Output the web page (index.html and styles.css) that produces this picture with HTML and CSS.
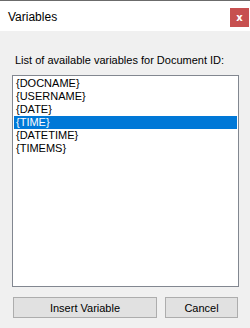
FILE: index.html
```html
<!DOCTYPE html>
<html lang="en">
<head>
    <meta charset="UTF-8">
    <title>Variables</title>
    <link rel="stylesheet" href="styles.css">
</head>
<body>
    <div class="window">
        <div class="titlebar">
            <span class="title">Variables</span>
            <button class="close">x</button>
        </div>
        <div class="content">
            <label class="caption">List of available variables for Document ID:</label>
            <ul class="listbox">
                <li>{DOCNAME}</li>
                <li>{USERNAME}</li>
                <li>{DATE}</li>
                <li class="selected">{TIME}</li>
                <li>{DATETIME}</li>
                <li>{TIMEMS}</li>
            </ul>
            <div class="buttons">
                <button class="btn btn-insert">Insert Variable</button>
                <button class="btn btn-cancel">Cancel</button>
            </div>
        </div>
    </div>
</body>
</html>
```

FILE: styles.css
```css
body {
    margin: 0;
    padding: 0;
    font-family: "Liberation Sans", Arial, sans-serif;
    font-size: 11px;
    color: #000;
    background: #f0f0f0;
}

.window {
    width: 250px;
    height: 328px;
    display: flex;
    flex-direction: column;
    border-top: 1px solid #6b6b6b;
    box-sizing: border-box;
}

.titlebar {
    height: 30px;
    background: #fff;
    display: flex;
    align-items: center;
    padding-left: 8px;
}

.title {
    flex: 1;
    font-size: 12px;
    margin-top: 1px;
}

.close {
    width: 19px;
    height: 19px;
    margin-right: 1px;
    align-self: flex-start;
    margin-top: 7px;
    border: none;
    padding: 0;
    background: #c75050;
    color: #fff;
    font-family: "DejaVu Sans", sans-serif;
    font-weight: bold;
    font-size: 10px;
    line-height: 19px;
}

.content {
    flex: 1;
    background: #f0f0f0;
    padding: 21px 12px 0 12px;
    display: flex;
    flex-direction: column;
}

.caption {
    display: block;
    height: 16px;
    line-height: 16px;
    padding-left: 3px;
    margin-bottom: 7px;
    white-space: nowrap;
}

.listbox {
    margin: 0;
    padding: 1px;
    list-style: none;
    width: 227px;
    height: 212px;
    box-sizing: border-box;
    background: #fff;
    border: 1px solid #828790;
}

.listbox li {
    height: 13px;
    line-height: 13px;
    padding-left: 2px;
    white-space: nowrap;
}

.listbox li.selected {
    background: #0078d7;
    color: #fff;
}

.buttons {
    display: flex;
    gap: 8px;
    margin-top: 10px;
    padding-left: 1px;
}

.btn {
    height: 21px;
    box-sizing: border-box;
    background: #e1e1e1;
    border: 1px solid #adadad;
    font-family: "Liberation Sans", Arial, sans-serif;
    font-size: 11px;
    padding: 0;
    color: #000;
}

.btn-insert {
    width: 144px;
}

.btn-cancel {
    width: 73px;
}
```
